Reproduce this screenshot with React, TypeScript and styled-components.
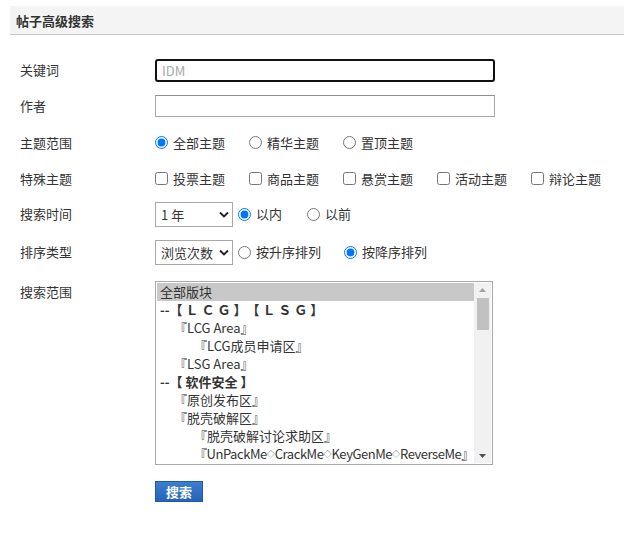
import { createGlobalStyle } from 'styled-components';
import styled from 'styled-components';

const GlobalStyle = createGlobalStyle`
    html, body {
        margin: 0;
        background: #ffffff;
    }
    body {
        font-family: 'Noto Sans CJK SC', 'Noto Sans', sans-serif;
        font-size: 13px;
        color: #333333;
        text-spacing-trim: space-all;
    }
`;

const Page = styled.div`
    padding: 6px 0 0 10px;
`;

const Header = styled.div`
    height: 28px;
    display: flex;
    align-items: center;
    padding-left: 6px;
    background: #f4f4f4;
    border-bottom: 1px solid #c4c4c4;
    font-weight: bold;
    font-size: 13px;
    color: #333;
`;

const Form = styled.div`
    padding: 17px 0 0 10px;
`;

const Row = styled.div<{ $h?: number; $top?: boolean }>`
    display: flex;
    align-items: ${(p) => (p.$top ? 'flex-start' : 'center')};
    height: ${(p) => (p.$h ? `${p.$h}px` : 'auto')};
`;

const Label = styled.div<{ $pad?: number }>`
    width: 135px;
    flex-shrink: 0;
    line-height: 18px;
    padding-top: ${(p) => p.$pad ?? 0}px;
    color: #333;
`;

const Controls = styled.div`
    display: flex;
    align-items: center;
`;

const TextInput = styled.input<{ $focused?: boolean }>`
    box-sizing: border-box;
    width: 340px;
    height: ${(p) => (p.$focused ? 23 : 22)}px;
    margin: 0;
    padding: 0 5px;
    font: inherit;
    font-size: 13px;
    color: #a8a8a8;
    background: #fff;
    border: ${(p) => (p.$focused ? '2px solid #111' : '1px solid #a9a9a9')};
    border-top-color: ${(p) => (p.$focused ? '#111' : '#8f8f8f')};
    border-radius: ${(p) => (p.$focused ? 3 : 0)}px;
    outline: none;
`;

const Choice = styled.label<{ $gap?: number }>`
    display: flex;
    align-items: center;
    margin-right: ${(p) => p.$gap ?? 24}px;
    line-height: 18px;
    color: #333;
    white-space: nowrap;
`;

const Radio = styled.input.attrs({ type: 'radio' })`
    width: 13px;
    height: 13px;
    margin: 0 5px 0 0;
    accent-color: #0075ff;
`;

const Check = styled.input.attrs({ type: 'checkbox' })`
    width: 13px;
    height: 13px;
    margin: 0 5px 0 0;
`;

const SelectWrap = styled.span`
    position: relative;
    display: inline-flex;
    margin-right: 5px;
`;

const Select = styled.select`
    appearance: none;
    box-sizing: border-box;
    width: 78px;
    height: 25px;
    margin: 0;
    padding: 0 0 0 5px;
    font: inherit;
    font-size: 13px;
    color: #333;
    background: #fff;
    border: 1px solid #a8a8a8;
    border-radius: 0;
    outline: none;
`;

const Chevron = styled.svg`
    position: absolute;
    right: 4px;
    top: 9px;
    width: 10px;
    height: 7px;
    pointer-events: none;
`;

const ListBox = styled.div`
    box-sizing: border-box;
    width: 338px;
    height: 184px;
    margin-top: 9px;
    border: 1px solid #a9a9a9;
    padding: 1px;
    display: flex;
    background: #fff;
`;

const Options = styled.div`
    flex: 1;
    overflow: hidden;
    min-width: 0;
`;

const indents = [3, 17, 37];

const Option = styled.div<{ $level?: number; $selected?: boolean; $group?: boolean; $tight?: boolean }>`
    height: 18px;
    line-height: 18px;
    padding-left: ${(p) => indents[p.$level ?? 0]}px;
    white-space: nowrap;
    font-weight: ${(p) => (p.$group ? 'bold' : 'normal')};
    letter-spacing: ${(p) => (p.$tight ? '-0.45px' : 'normal')};
    background: ${(p) => (p.$selected ? '#c8c8c8' : 'transparent')};
    color: #333;
`;

const Sep = styled.span`
    display: inline-block;
    font-size: 8px;
    line-height: 18px;
    vertical-align: top;
    letter-spacing: 0;
    color: #444;
`;

const ScrollBar = styled.div`
    width: 17px;
    flex-shrink: 0;
    background: #f1f1f1;
    display: flex;
    flex-direction: column;
    align-items: center;
`;

const ArrowBox = styled.div`
    width: 17px;
    height: 14px;
    display: flex;
    align-items: center;
    justify-content: center;
`;

const Thumb = styled.div`
    width: 12px;
    height: 32px;
    background: #c1c1c1;
    margin-top: 1px;
`;

const Spacer = styled.div`
    flex: 1;
`;

const SubmitRow = styled.div`
    padding: 16px 0 0 135px;
`;

const Button = styled.button`
    box-sizing: border-box;
    width: 48px;
    height: 21px;
    padding: 0;
    font-family: inherit;
    font-size: 13px;
    font-weight: bold;
    color: #fff;
    background: linear-gradient(#3c7ed2, #2763b6);
    border: 1px solid #1f5aa6;
    border-radius: 0;
    cursor: pointer;
`;

const topics = ['全部主题', '精华主题', '置顶主题'];
const specials = ['投票主题', '商品主题', '悬赏主题', '活动主题', '辩论主题'];

const forums: { text: string; level?: number; group?: boolean; selected?: boolean }[] = [
    { text: '全部版块', selected: true },
    { text: '--【 Ｌ Ｃ Ｇ 】【 Ｌ Ｓ Ｇ 】', group: true },
    { text: '『LCG Area』', level: 1 },
    { text: '『LCG成员申请区』', level: 2 },
    { text: '『LSG Area』', level: 1 },
    { text: '--【 软件安全 】', group: true },
    { text: '『原创发布区』', level: 1 },
    { text: '『脱壳破解区』', level: 1 },
    { text: '『脱壳破解讨论求助区』', level: 2 },
    { text: '『UnPackMe◇CrackMe◇KeyGenMe◇ReverseMe』', level: 2 },
];

// the small diamond separators are drawn at a smaller size, as in the original list
const renderText = (text: string) => {
    const parts = text.split('◇');
    return parts.map((part, i) => (
        <span key={i}>
            {i > 0 && <Sep>◇</Sep>}
            {part}
        </span>
    ));
};

const ChevronIcon = () => (
    <Chevron viewBox="0 0 10 7">
        <path d="M1 1.5 L5 5.5 L9 1.5" fill="none" stroke="#222" strokeWidth="1.8" />
    </Chevron>
);

const App = () => {
    return (
        <Page>
            <GlobalStyle />
            <Header>帖子高级搜索</Header>
            <Form>
                <Row $h={36}>
                    <Label>关键词</Label>
                    <TextInput $focused defaultValue="IDM" />
                </Row>
                <Row $h={36}>
                    <Label>作者</Label>
                    <TextInput />
                </Row>
                <Row $h={37}>
                    <Label>主题范围</Label>
                    <Controls>
                        {topics.map((t, i) => (
                            <Choice key={t}>
                                <Radio name="topic" defaultChecked={i === 0} />
                                {t}
                            </Choice>
                        ))}
                    </Controls>
                </Row>
                <Row $h={35}>
                    <Label>特殊主题</Label>
                    <Controls>
                        {specials.map((t) => (
                            <Choice key={t}>
                                <Check />
                                {t}
                            </Choice>
                        ))}
                    </Controls>
                </Row>
                <Row $h={36}>
                    <Label>搜索时间</Label>
                    <Controls>
                        <SelectWrap>
                            <Select defaultValue="1">
                                <option value="1">1 年</option>
                            </Select>
                            <ChevronIcon />
                        </SelectWrap>
                        <Choice $gap={25}>
                            <Radio name="time" defaultChecked />
                            以内
                        </Choice>
                        <Choice>
                            <Radio name="time" />
                            以前
                        </Choice>
                    </Controls>
                </Row>
                <Row $h={40}>
                    <Label>排序类型</Label>
                    <Controls>
                        <SelectWrap>
                            <Select defaultValue="views">
                                <option value="views">浏览次数</option>
                            </Select>
                            <ChevronIcon />
                        </SelectWrap>
                        <Choice $gap={23}>
                            <Radio name="order" />
                            按升序排列
                        </Choice>
                        <Choice>
                            <Radio name="order" defaultChecked />
                            按降序排列
                        </Choice>
                    </Controls>
                </Row>
                <Row $top>
                    <Label $pad={11}>搜索范围</Label>
                    <ListBox>
                        <Options>
                            {forums.map((f) => (
                                <Option
                                    key={f.text}
                                    $level={f.level}
                                    $group={f.group}
                                    $selected={f.selected}
                                    $tight={f.text.length > 30}
                                >
                                    {renderText(f.text)}
                                </Option>
                            ))}
                        </Options>
                        <ScrollBar>
                            <ArrowBox>
                                <svg width="7" height="4" viewBox="0 0 7 4">
                                    <path d="M0 4 L3.5 0 L7 4 Z" fill="#a3a3a3" />
                                </svg>
                            </ArrowBox>
                            <Thumb />
                            <Spacer />
                            <ArrowBox>
                                <svg width="7" height="4" viewBox="0 0 7 4">
                                    <path d="M0 0 L3.5 4 L7 0 Z" fill="#505050" />
                                </svg>
                            </ArrowBox>
                        </ScrollBar>
                    </ListBox>
                </Row>
                <SubmitRow>
                    <Button type="button">搜索</Button>
                </SubmitRow>
            </Form>
        </Page>
    );
};

export default App;
